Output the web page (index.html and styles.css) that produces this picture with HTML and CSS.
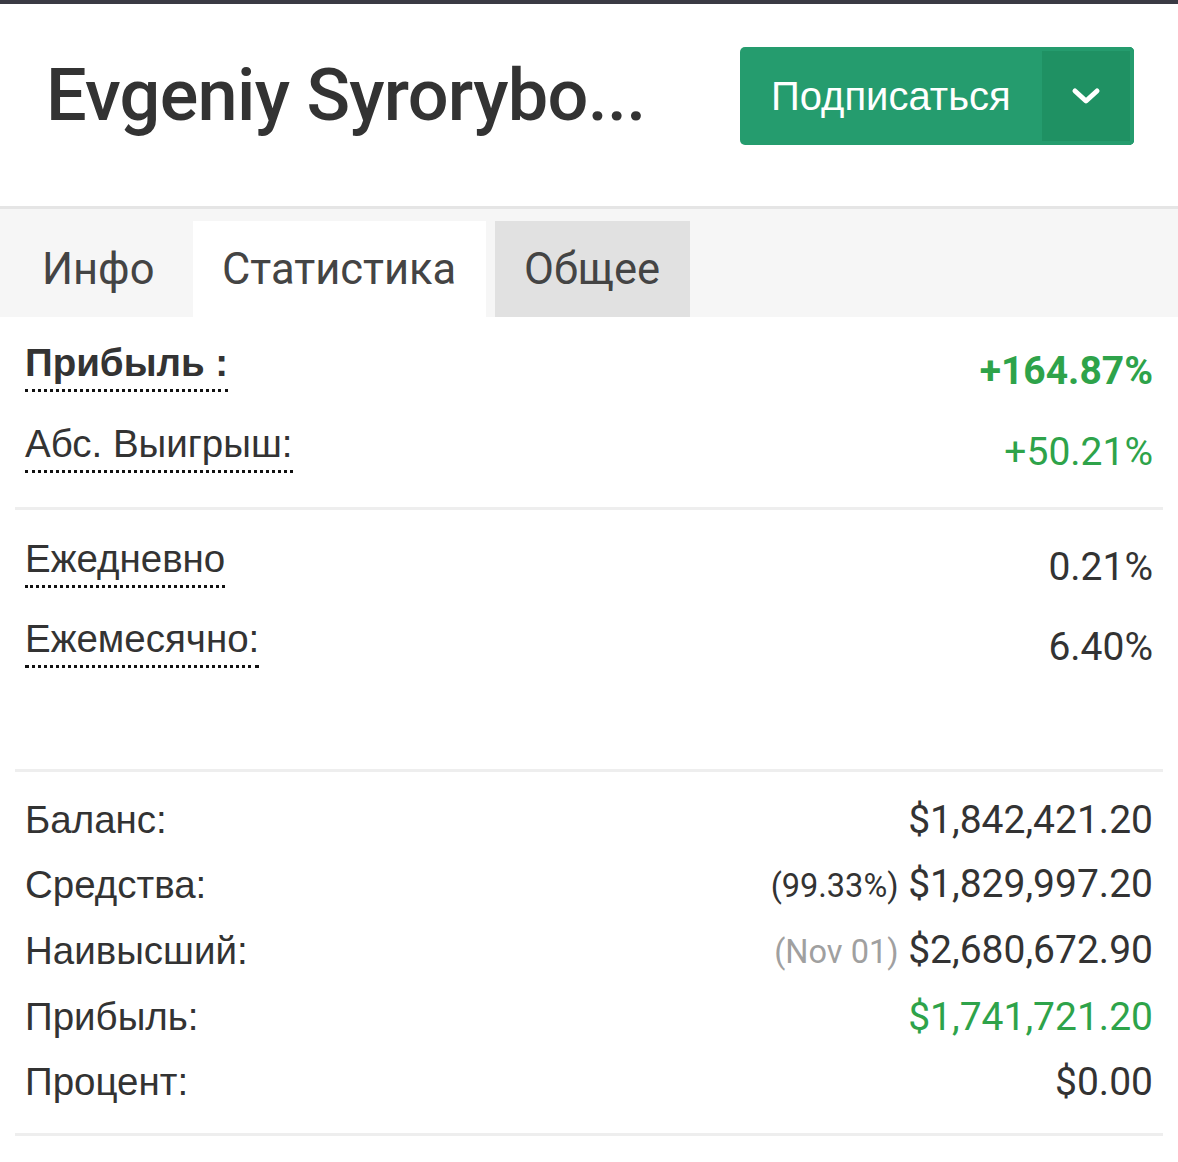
FILE: index.html
```html
<!DOCTYPE html>
<html lang="ru">
<head>
<meta charset="utf-8">
<title>Evgeniy Syrorybo</title>
<link rel="stylesheet" href="styles.css">
</head>
<body>
<div class="topbar"></div>
<header class="header">
  <h1 class="title">Evgeniy Syrorybo...</h1>
  <div class="subscribe">
    <span class="subscribe-main">Подписаться</span>
    <span class="subscribe-drop">
      <svg width="30" height="20" viewBox="0 0 30 20"><path d="M4 5 L15 15 L26 5" fill="none" stroke="#fff" stroke-width="5" stroke-linecap="round" stroke-linejoin="round"/></svg>
    </span>
  </div>
</header>
<nav class="tabs">
  <div class="tab">Инфо</div>
  <div class="tab tab-active">Статистика</div>
  <div class="tab tab-hover">Общее</div>
</nav>
<main class="stats">
  <section class="group group-top">
    <div class="row row-gain">
      <span class="label dotted bold">Прибыль :</span>
      <span class="value green bold">+164.87%</span>
    </div>
    <div class="row row-gain">
      <span class="label dotted">Абс. Выигрыш:</span>
      <span class="value green">+50.21%</span>
    </div>
  </section>
  <section class="group group-mid">
    <div class="row row-gain">
      <span class="label dotted">Ежедневно</span>
      <span class="value">0.21%</span>
    </div>
    <div class="row row-gain">
      <span class="label dotted">Ежемесячно:</span>
      <span class="value">6.40%</span>
    </div>
  </section>
  <section class="group group-money">
    <div class="row row-money">
      <span class="label">Баланс:</span>
      <span class="value">$1,842,421.20</span>
    </div>
    <div class="row row-money">
      <span class="label">Средства:</span>
      <span class="value"><span class="note dark">(99.33%)</span> $1,829,997.20</span>
    </div>
    <div class="row row-money">
      <span class="label">Наивысший:</span>
      <span class="value"><span class="note light">(Nov 01)</span> $2,680,672.90</span>
    </div>
    <div class="row row-money">
      <span class="label">Прибыль:</span>
      <span class="value green">$1,741,721.20</span>
    </div>
    <div class="row row-money">
      <span class="label">Процент:</span>
      <span class="value">$0.00</span>
    </div>
  </section>
</main>
</body>
</html>
```

FILE: styles.css
```css
* { box-sizing: border-box; }
html, body { margin: 0; padding: 0; background: #fff; }
body { color: #333; font-family: "Liberation Sans", Arial, sans-serif; }

.topbar { height: 4px; background: #3a3a44; }

.header {
  height: 202px;
  display: flex;
  justify-content: space-between;
  align-items: flex-start;
  padding: 0 44px 0 46px;
}
.title {
  margin: 0;
  padding-top: 52px;
  font-family: Roboto, sans-serif;
  font-weight: 500;
  font-size: 72px;
  line-height: 80px;
  letter-spacing: -0.7px;
  color: #333;
}
.subscribe {
  margin-top: 43px;
  display: flex;
  height: 98px;
  width: 394px;
  border-radius: 5px;
  overflow: hidden;
  background: #259c6e;
}
.subscribe-main {
  flex: 1;
  display: flex;
  align-items: center;
  padding-left: 31px;
  color: #fff;
  font-size: 40px;
}
.subscribe-drop {
  width: 92px;
  display: flex;
  align-items: center;
  justify-content: center;
  background: #1f9163;
  border: 4px solid #259c6e;
  border-left: none;
}

.tabs {
  border-top: 3px solid #e5e5e5;
  background: #f6f6f6;
  height: 111px;
  padding-top: 12px;
  display: flex;
  align-items: stretch;
}
.tab {
  display: flex;
  align-items: center;
  font-family: Roboto, sans-serif;
  font-size: 43.5px;
  color: #444;
  padding: 0 29px;
}
.tab:first-child { padding-left: 42px; width: 193px; }
.tab-active { background: #fff; width: 293px; }
.tab-hover { background: #e1e1e1; width: 195px; margin-left: 9px; }

.stats { padding: 0 15px; }
.group { border-bottom: 3px solid #eee; }
.group-top { padding: 24px 10px 4px; }
.group-mid { padding: 27px 10px 72px; }
.group-money { padding: 15px 10px 18px; }

.row { display: flex; justify-content: space-between; align-items: flex-start; }
.row-gain { height: 81px; }
.group-mid .row-gain { height: 80px; }
.row-money { height: 65.6px; align-items: center; }

.label {
  font-size: 38.5px;
  line-height: 44px;
  color: #333;
}
.row-money .label { line-height: 66px; }
.dotted {
  border-bottom: 3px dotted #111;
  padding-bottom: 4px;
}
.bold { font-weight: 700; }

.value {
  font-family: Roboto, sans-serif;
  font-size: 39px;
  line-height: 44px;
  color: #333;
  padding-top: 8px;
}
.row-money .value { padding-top: 0; line-height: 66px; }
.green { color: #2ea34a; }
.note { font-size: 32.5px; }
.note.dark { color: #333; }
.note.light { color: #a0a0a0; }
```
